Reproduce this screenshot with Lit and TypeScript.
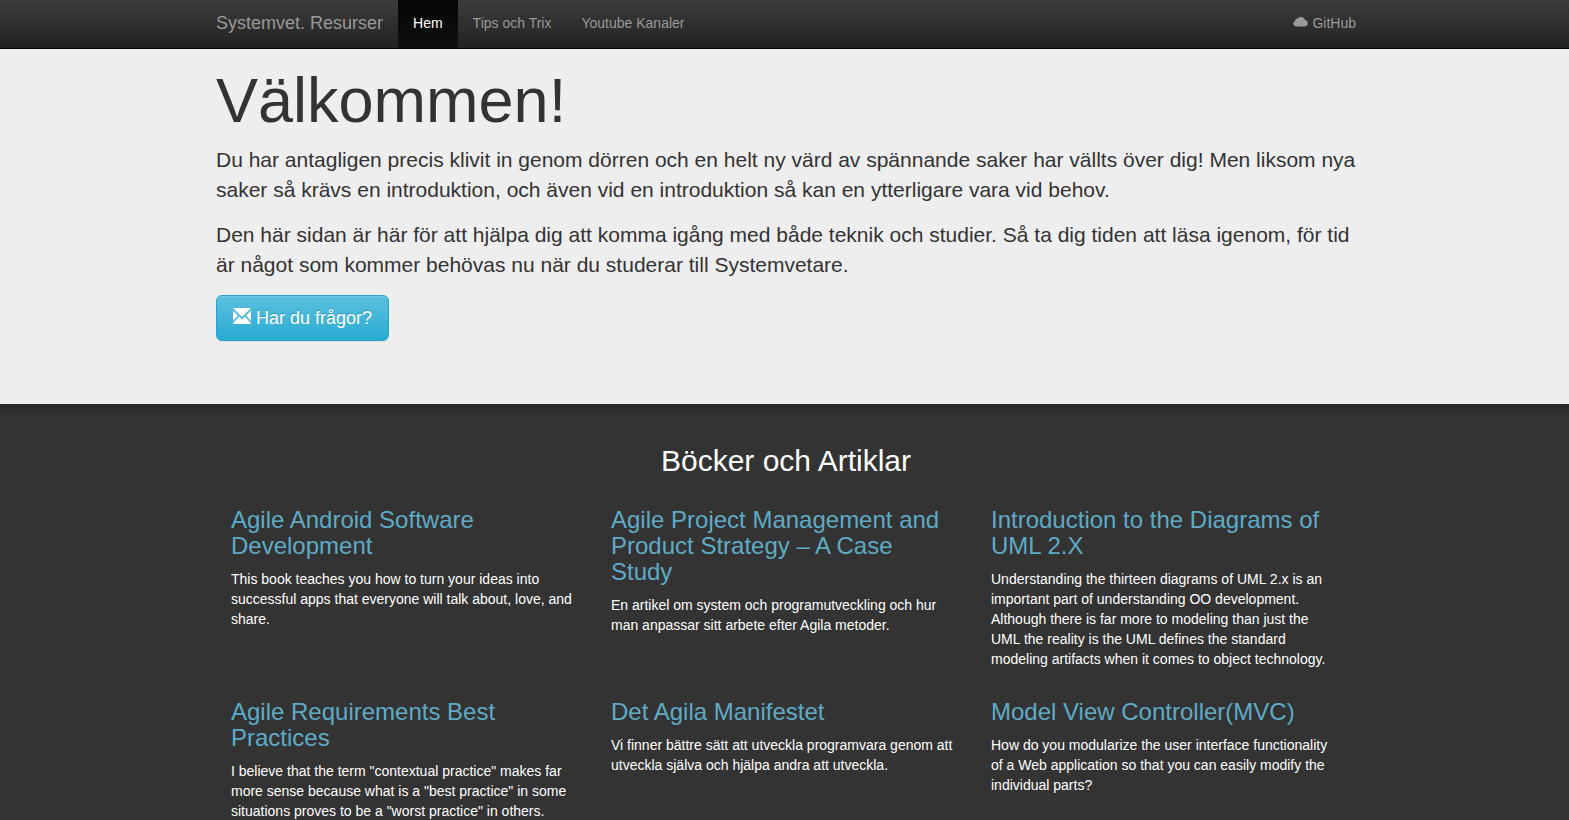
import { LitElement, html, css } from "lit";
import { customElement, property } from "lit/decorators.js";

interface Resource {
  title: string;
  text: string;
}

const RESOURCES: Resource[] = [
  {
    title: "Agile Android Software Development",
    text: "This book teaches you how to turn your ideas into successful apps that everyone will talk about, love, and share.",
  },
  {
    title: "Agile Project Management and Product Strategy – A Case Study",
    text: "En artikel om system och programutveckling och hur man anpassar sitt arbete efter Agila metoder.",
  },
  {
    title: "Introduction to the Diagrams of UML 2.X",
    text: "Understanding the thirteen diagrams of UML 2.x is an important part of understanding OO development. Although there is far more to modeling than just the UML the reality is the UML defines the standard modeling artifacts when it comes to object technology.",
  },
  {
    title: "Agile Requirements Best Practices",
    text: 'I believe that the term "contextual practice" makes far more sense because what is a "best practice" in some situations proves to be a "worst practice" in others.',
  },
  {
    title: "Det Agila Manifestet",
    text: "Vi finner bättre sätt att utveckla programvara genom att utveckla själva och hjälpa andra att utveckla.",
  },
  {
    title: "Model View Controller(MVC)",
    text: "How do you modularize the user interface functionality of a Web application so that you can easily modify the individual parts?",
  },
];

@customElement("resource-item")
class ResourceItem extends LitElement {
  @property({ attribute: false }) item!: Resource;

  static styles = css`
    :host {
      display: block;
      padding: 0 15px;
    }
    .title {
      margin: 0 0 10px;
      padding-right: 10px;
      font-size: 24px;
      line-height: 26px;
      font-weight: 400;
    }
    .link {
      color: #5fabc6;
      text-decoration: none;
    }
    .text {
      margin: 0;
    }
  `;

  render() {
    return html`
      <h3 class="title"><a class="link" href="#">${this.item.title}</a></h3>
      <p class="text">${this.item.text}</p>
    `;
  }
}

@customElement("app-root")
class AppRoot extends LitElement {
  static styles = css`
    :host {
      display: flex;
      flex-direction: column;
      min-height: 100vh;
      font: 14px/20px "Liberation Sans", Arial, sans-serif;
      color: #333;
      background: #333;
    }
    * {
      box-sizing: border-box;
    }
    .band {
      padding-left: 3px;
    }
    .container {
      max-width: 1170px;
      margin: 0 auto;
      padding: 0 15px;
    }
    .navbar {
      background: linear-gradient(#3c3c3c, #222);
      border-bottom: 1px solid #080808;
    }
    .nav {
      display: flex;
      flex-wrap: wrap;
    }
    .brand,
    .item {
      padding: 13px 15px 15px;
      color: #999;
      text-decoration: none;
    }
    .brand {
      padding-left: 0;
      font-size: 18px;
    }
    .active {
      color: #fff;
      background: linear-gradient(#060606, #101010);
    }
    .end {
      margin-left: auto;
      padding-right: 0;
    }
    .cloud {
      width: 16px;
      height: 12px;
      vertical-align: 0;
      fill: currentColor;
    }
    .intro {
      background: #eee;
      padding-top: 17px;
      padding-bottom: 63px;
    }
    .welcome {
      margin: 0 0 10px;
      font-size: 63px;
      line-height: 69px;
      font-weight: 400;
    }
    .lead {
      margin: 0 0 15px;
      font-size: 21px;
      line-height: 30px;
    }
    .ask {
      display: block;
      padding: 10px 16px;
      border: 1px solid #28a4c9;
      border-radius: 6px;
      font: 18px/24px "Liberation Sans", Arial, sans-serif;
      color: #fff;
      background: linear-gradient(#5bc0de, #2aabd2);
      text-shadow: 0 -1px 0 rgba(0, 0, 0, 0.2);
      box-shadow: inset 0 1px 0 rgba(255, 255, 255, 0.15), 0 1px 1px rgba(0, 0, 0, 0.075);
      cursor: pointer;
    }
    .mail {
      width: 18px;
      height: 16px;
      vertical-align: 0;
      fill: currentColor;
    }
    .books {
      flex: 1;
      padding-top: 40px;
      color: #fff;
      background: linear-gradient(#272727, #333 12px);
    }
    .heading {
      margin: 0 0 30px;
      font-size: 30px;
      line-height: 33px;
      font-weight: 400;
      text-align: center;
    }
    .grid {
      display: grid;
      grid-template-columns: repeat(3, 1fr);
      row-gap: 30px;
    }
    @media (max-width: 800px) {
      .grid {
        grid-template-columns: 1fr;
      }
    }
  `;

  render() {
    return html`
      <header class="band navbar">
        <nav class="container nav">
          <a class="brand" href="#">Systemvet. Resurser</a>
          <a class="item active" href="#" aria-current="page">Hem</a>
          <a class="item" href="#">Tips och Trix</a>
          <a class="item" href="#">Youtube Kanaler</a>
          <a class="item end" href="#"
            ><svg class="cloud" viewBox="0 0 16 12" aria-hidden="true">
              <path d="M3 10.500a2.800 2.800 0 0 1-.8-5.500A2.300 2.300 0 0 1 4.800 2.500a4 4 0 0 1 7.200 1.500 3.300 3.300 0 0 1 0 6.500z" />
            </svg>
            GitHub</a
          >
        </nav>
      </header>
      <section class="band intro">
        <div class="container">
          <h1 class="welcome">Välkommen!</h1>
          <p class="lead">
            Du har antagligen precis klivit in genom dörren och en helt ny värd av spännande saker har vällts över dig!
            Men liksom nya saker så krävs en introduktion, och även vid en introduktion så kan en ytterligare vara vid
            behov.
          </p>
          <p class="lead">
            Den här sidan är här för att hjälpa dig att komma igång med både teknik och studier. Så ta dig tiden att
            läsa igenom, för tid är något som kommer behövas nu när du studerar till Systemvetare.
          </p>
          <button class="ask" type="button">
            <svg class="mail" viewBox="0 0 18 16" aria-hidden="true">
              <path d="M0 0h18L9 9zM0 2.500l5 5L0 13zM18 2.500v10.500l-5-5.500zM0 16v-1l6.200-6.400L9 11.500l2.800-2.900L18 15v1z" />
            </svg>
            Har du frågor?
          </button>
        </div>
      </section>
      <section class="band books">
        <div class="container">
          <h2 class="heading">Böcker och Artiklar</h2>
          <div class="grid">
            ${RESOURCES.map((item) => html`<resource-item .item=${item}></resource-item>`)}
          </div>
        </div>
      </section>
    `;
  }
}
